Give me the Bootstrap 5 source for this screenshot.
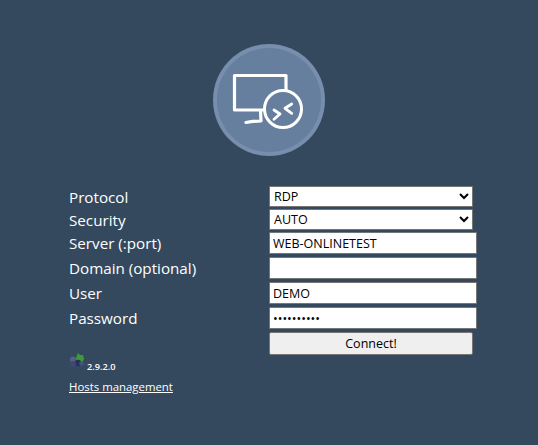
<!DOCTYPE html>
<html lang="en">
<head>
<meta charset="utf-8">
<title>Login</title>
<link href="https://cdn.jsdelivr.net/npm/bootstrap@5.3.0/dist/css/bootstrap.min.css" rel="stylesheet">
<style>
html,body{height:100%}
body{background:#34495e;color:#fff;font-family:"Open Sans","Noto Sans",sans-serif;font-size:14px;overflow:hidden}
.login-wrap{padding:44px 0 0 69px;width:538px;height:445px}
.logo-box{width:400px;height:142px;padding-left:144px}
.field-line{display:flex;align-items:center}
.field-name{width:200px;font-size:15.2px;line-height:20px;color:#fff}
.pick,.entry,.go-btn{font-family:"Open Sans","Noto Sans",sans-serif;font-size:12.5px;color:#000;border:1px solid #767676;border-radius:1px;background-color:#fff;outline:0}
.pick{width:204px;height:21px;padding:0;appearance:auto}
.entry{width:208px;height:22px;padding:0 3px}
.go-btn{width:204px;height:23px;background:#efefef;padding:1px 0 0;border-radius:2px;line-height:18px}
.gap-a{margin-bottom:2px}
.gap-b{margin-bottom:3px}
.ver-line{height:16px;margin-top:-2px;display:flex;align-items:flex-start;gap:2px;font-size:9.2px;line-height:11px;font-weight:600;color:#fff}
.ver-line span{margin-top:8px}
.hosts-link{display:inline-block;margin-top:10px;font-size:11.4px;line-height:16px;color:#fff;text-decoration:underline}
</style>
</head>
<body>
<div class="login-wrap">
  <div class="logo-box">
    <svg width="112" height="112" viewBox="0 0 112 112" aria-label="Remote desktop logo">
      <circle cx="56" cy="56" r="56" fill="#778eac"/>
      <circle cx="56" cy="56" r="52" fill="#667f9f"/>
      <path d="M50 66H21.500V31.500H73V47M47.500 66l.5 11c-5 0-10 .5-15 1.500" fill="none" stroke="#fff" stroke-width="3.200" stroke-linecap="round" stroke-linejoin="round"/>
      <circle cx="70" cy="65" r="18.500" fill="#667f9f" stroke="#fff" stroke-width="3"/>
      <path d="M61 66l6 4-6 5.300M78.700 60l-6.700 4.300 6.700 5" fill="none" stroke="#fff" stroke-width="2.800" stroke-linecap="round" stroke-linejoin="round"/>
    </svg>
  </div>
  <form>
    <div class="field-line gap-a"><label class="field-name">Protocol</label><select class="pick"><option>RDP</option></select></div>
    <div class="field-line gap-a"><label class="field-name">Security</label><select class="pick"><option>AUTO</option></select></div>
    <div class="field-line gap-b"><label class="field-name">Server (:port)</label><input class="entry" value="WEB-ONLINETEST"></div>
    <div class="field-line gap-b"><label class="field-name">Domain (optional)</label><input class="entry"></div>
    <div class="field-line gap-b"><label class="field-name">User</label><input class="entry" value="DEMO"></div>
    <div class="field-line gap-b"><label class="field-name">Password</label><input class="entry" type="password" value="demodemo12"></div>
    <div class="field-line"><div class="field-name"></div><button type="button" class="go-btn">Connect!</button></div>
  </form>
  <div class="ver-line">
    <svg width="16" height="16" viewBox="0 0 16 16" aria-hidden="true">
      <path d="M7 5l2-5 2 2 3 0 1 4-2 4-5-1z" fill="#3d9a35"/>
      <circle cx="4" cy="6.500" r="3" fill="#56617f"/><circle cx="9" cy="10" r="3.200" fill="#26325c"/><circle cx="4" cy="11" r="3" fill="#3d4a70"/><circle cx="12.500" cy="10.500" r="2.300" fill="#44527c"/>
    </svg>
    <span>2.9.2.0</span>
  </div>
  <a class="hosts-link" href="#">Hosts management</a>
</div>
</body>
</html>
